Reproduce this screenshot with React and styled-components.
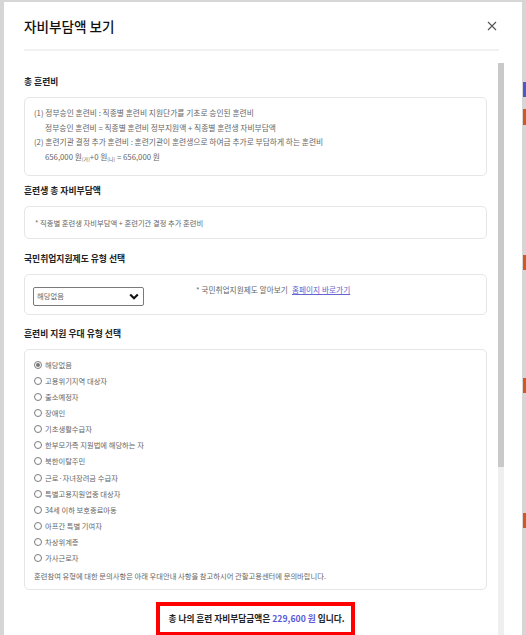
import React from 'react'
import styled, { createGlobalStyle } from 'styled-components'

const GlobalStyle = createGlobalStyle`
  html, body {
    margin: 0;
    padding: 0;
    background: #d6d6d6;
    font-family: "Noto Sans CJK KR", "Noto Sans", sans-serif;
  }
`

const Backdrop = styled.div`
  display: flex;
  height: 100vh;
  overflow: hidden;
  background: #d6d6d6;
`

const Gutter = styled.div`
  width: 4px;
  flex-shrink: 0;
`

const PageEdge = styled.div`
  width: 3px;
  flex-shrink: 0;
  display: flex;
  flex-direction: column;
  padding-left: 1px;
`

const Mark = styled.div`
  height: ${p => p.h}px;
  margin-top: ${p => p.gap}px;
  background: ${p => p.color};
`

const Modal = styled.div`
  flex: 1;
  margin-top: 2px;
  background: #fff;
  display: flex;
  flex-direction: column;
  min-width: 0;
`

const Header = styled.div`
  height: 47px;
  display: flex;
  align-items: center;
  justify-content: space-between;
  padding: 0 25px 0 20px;
`

const Title = styled.h2`
  margin: 0;
  font-size: 13.6px;
  font-weight: 500;
  color: #111;
`

const CloseButton = styled.button`
  border: 0;
  padding: 0;
  background: none;
  width: 10px;
  height: 10px;
  display: flex;
  cursor: pointer;
`

const Divider = styled.div`
  height: 2px;
  margin: 0 23px 0 20px;
  background: #f1f1f1;
`

const Body = styled.div`
  display: flex;
  margin-top: 11px;
  padding-left: 20px;
  flex: 1;
  min-height: 0;
`

const Content = styled.div`
  width: 463px;
  flex-shrink: 0;
  padding-top: 13px;
`

const ScrollTrack = styled.div`
  width: 6px;
  margin-left: 11px;
  margin-top: 1px;
  background: #efefef;
  display: flex;
  flex-direction: column;
`

const ScrollThumb = styled.div`
  height: 404px;
  background: #c9c9c9;
`

const Section = styled.section`
  margin-top: ${p => p.gap || 0}px;
`

const SectionTitle = styled.h3`
  margin: 0 0 8px;
  font-size: 8.8px;
  line-height: 14px;
  font-weight: 700;
  color: #222;
`

const Box = styled.div`
  border: 1px solid #e6e6e6;
  border-radius: 5px;
  padding: ${p => p.pad || '8px 9px'};
  font-size: ${p => p.fs || 7.3}px;
  line-height: ${p => p.lh || '14px'};
  color: #666;
`

const Line = styled.div`
  padding-left: ${p => (p.indent ? '11px' : '0')};
`

const Sub = styled.span`
  font-size: 5px;
  vertical-align: -1px;
`

const SelectRow = styled.div`
  display: flex;
  align-items: flex-start;
`

const FakeSelect = styled.div`
  margin-top: 4px;
  width: 111px;
  height: 19px;
  box-sizing: border-box;
  border: 1px solid #7a7a7a;
  border-radius: 2px;
  display: flex;
  align-items: center;
  justify-content: space-between;
  padding: 0 4px 0 3px;
  color: #666;
  font-size: 7.3px;
`

const Info = styled.div`
  margin-left: 52px;
  line-height: 14px;
`

const InfoLink = styled.a`
  margin-left: 4px;
  color: #6464d2;
  text-decoration: underline;
`

const RadioList = styled.div`
  display: flex;
  flex-direction: column;
`

const RadioRow = styled.label`
  display: flex;
  align-items: center;
  height: 16.1px;
  gap: 3px;
`

const RadioDot = styled.span`
  width: 8px;
  height: 8px;
  box-sizing: border-box;
  border-radius: 50%;
  border: 1px solid #7b7b7b;
  display: flex;
  align-items: center;
  justify-content: center;
  &::after {
    content: '';
    width: 4px;
    height: 4px;
    border-radius: 50%;
    background: ${p => (p.checked ? '#777' : 'transparent')};
  }
`

const Note = styled.div`
  margin-top: 3px;
  line-height: 14px;
`

const TotalWrap = styled.div`
  display: flex;
  justify-content: center;
  margin-top: 12px;
`

const TotalBox = styled.div`
  border: 4px solid #ff0000;
  padding: 6px 6px 6px 8px;
  font-size: 8.7px;
  line-height: 14px;
  font-weight: 700;
  color: #222;
`

const Amount = styled.span`
  color: #5b5bd8;
  font-weight: 600;
`

const types = [
  '해당없음',
  '고용위기지역 대상자',
  '출소예정자',
  '장애인',
  '기초생활수급자',
  '한부모가족 지원법에 해당하는 자',
  '북한이탈주민',
  '근로·자녀장려금 수급자',
  '특별고용지원업종 대상자',
  '34세 이하 보호종료아동',
  '아프간 특별 기여자',
  '차상위계층',
  '가사근로자'
]

const edgeMarks = [
  { gap: 82, h: 15, color: '#4a5bc8' },
  { gap: 12, h: 16, color: '#d6561f' },
  { gap: 130, h: 15, color: '#d6561f' },
  { gap: 108, h: 15, color: '#d6561f' },
  { gap: 120, h: 15, color: '#d6561f' }
]

export default function App() {
  return (
    <>
      <GlobalStyle />
      <Backdrop>
        <Gutter />
        <Modal>
          <Header>
            <Title>자비부담액 보기</Title>
            <CloseButton aria-label="닫기">
              <svg width="10" height="10" viewBox="0 0 10 10">
                <path d="M1 1L9 9M9 1L1 9" stroke="#555" strokeWidth="1.1" />
              </svg>
            </CloseButton>
          </Header>
          <Divider />
          <Body>
            <Content>
              <Section>
                <SectionTitle>총 훈련비</SectionTitle>
                <Box fs={7.75} lh="14.7px">
                  <Line>(1) 정부승인 훈련비 : 직종별 훈련비 지원단가를 기초로 승인된 훈련비</Line>
                  <Line indent>정부승인 훈련비 = 직종별 훈련비 정부지원액 + 직종별 훈련생 자비부담액</Line>
                  <Line>(2) 훈련기관 결정 추가 훈련비 : 훈련기관이 훈련생으로 하여금 추가로 부담하게 하는 훈련비</Line>
                  <Line indent>
                    656,000 원<Sub>(가)</Sub>+0 원<Sub>(나)</Sub> = 656,000 원
                  </Line>
                </Box>
              </Section>

              <Section gap={8}>
                <SectionTitle>훈련생 총 자비부담액</SectionTitle>
                <Box pad="9px 9px 8px 10px" lh="14px" fs={7.3}>
                  * 직종별 훈련생 자비부담액 + 훈련기관 결정 추가 훈련비
                </Box>
              </Section>

              <Section gap={13}>
                <SectionTitle>국민취업지원제도 유형 선택</SectionTitle>
                <Box pad="8px 8px" fs={7.7}>
                  <SelectRow>
                    <FakeSelect>
                      <span>해당없음</span>
                      <svg width="10" height="7" viewBox="0 0 10 7">
                        <path d="M1.2 1.4L5 5.2L8.8 1.4" fill="none" stroke="#111" strokeWidth="2.1" />
                      </svg>
                    </FakeSelect>
                    <Info>
                      * 국민취업지원제도 알아보기
                      <InfoLink href="#">홈페이지 바로가기</InfoLink>
                    </Info>
                  </SelectRow>
                </Box>
              </Section>

              <Section gap={12}>
                <SectionTitle>훈련비 지원 우대 유형 선택</SectionTitle>
                <Box pad="7px 8px 6px 9px">
                  <RadioList>
                    {types.map((t, i) => (
                      <RadioRow key={t}>
                        <RadioDot checked={i === 0} />
                        {t}
                      </RadioRow>
                    ))}
                  </RadioList>
                  <Note>
                    훈련참여 유형에 대한 문의사항은 아래 우대안내 사항을 참고하시어 관할고용센터에 문의바랍니다.
                  </Note>
                </Box>
              </Section>

              <TotalWrap>
                <TotalBox>
                  총 나의 훈련 자비부담금액은 <Amount>229,600 원</Amount> 입니다.
                </TotalBox>
              </TotalWrap>
            </Content>
            <ScrollTrack>
              <ScrollThumb />
            </ScrollTrack>
          </Body>
        </Modal>
        <PageEdge>
          {edgeMarks.map((m, i) => (
            <Mark key={i} gap={m.gap} h={m.h} color={m.color} />
          ))}
        </PageEdge>
      </Backdrop>
    </>
  )
}
